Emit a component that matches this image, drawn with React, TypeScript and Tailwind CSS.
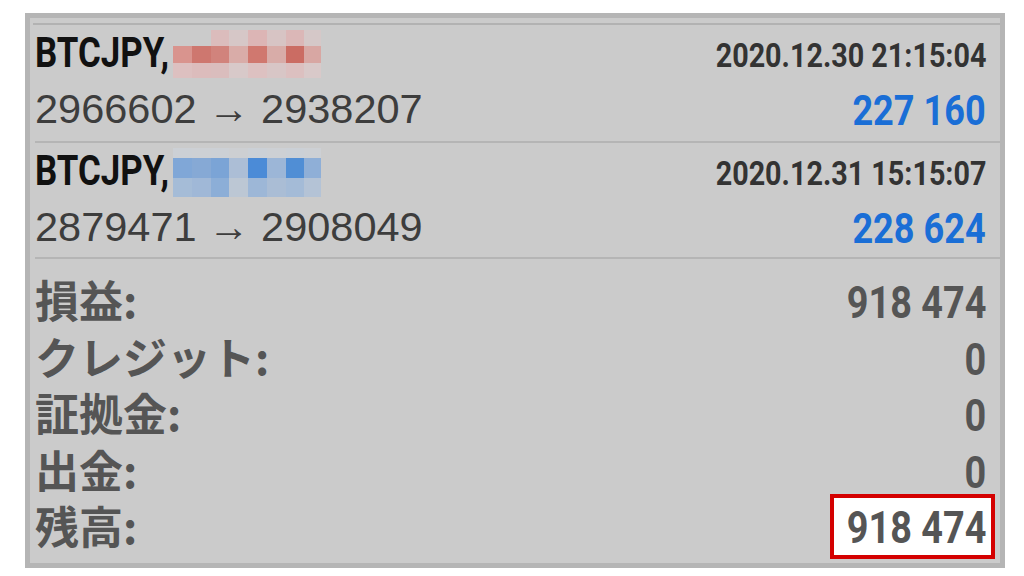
const cond = "font-['Roboto',sans-serif] font-bold inline-block whitespace-nowrap";
const regular = "font-['Liberation_Sans',Arial,sans-serif]";
const jp = "font-['Noto_Sans_CJK_JP','Noto_Sans',sans-serif]";

// pixelated blocks covering the order number
const redMosaic = {
  rows: ["h-[16px]", "h-[17px]", "h-[15px]"],
  cells: [
    ["bg-transparent", "bg-transparent", "bg-[#dbbcbc]", "bg-[#d6c7c7]", "bg-[#dcb5b5]", "bg-[#d7c4c4]", "bg-[#dbb7b7]", "bg-[#d5c8c8]"],
    ["bg-[#d9948e]", "bg-[#ce776f]", "bg-[#d1837c]", "bg-[#d9aca8]", "bg-[#d0786f]", "bg-[#d8aca8]", "bg-[#cb6c63]", "bg-[#d8a7a3]"],
    ["bg-[#ddc0c0]", "bg-[#dcbcbc]", "bg-[#dabdbd]", "bg-[#d8c9c9]", "bg-[#ddc1c1]", "bg-[#d8c6c6]", "bg-[#dcc0c0]", "bg-[#d9c9c9]"],
  ],
};

const blueMosaic = {
  rows: ["h-[10px]", "h-[20px]", "h-[19px]"],
  cells: [
    ["bg-[#ccd0d5]", "bg-[#cdd0d4]", "bg-[#ccd0d5]", "bg-[#cdcfd2]", "bg-[#cbd0d6]", "bg-[#cdd0d4]", "bg-[#cbd0d6]", "bg-[#cdd0d4]"],
    ["bg-[#80a7d7]", "bg-[#86a9d5]", "bg-[#7ba4d6]", "bg-[#acbed6]", "bg-[#4b8bd7]", "bg-[#9cb6d7]", "bg-[#508ed5]", "bg-[#8fafd7]"],
    ["bg-[#a5bcd7]", "bg-[#a0b8d7]", "bg-[#8caed7]", "bg-[#bcc7d4]", "bg-[#9db7d7]", "bg-[#aabdd5]", "bg-[#a4bbd7]", "bg-[#b4c3d6]"],
  ],
};

const colWidths = ["w-[19px]", "w-[19px]", "w-[18px]", "w-[19px]", "w-[19px]", "w-[19px]", "w-[18px]", "w-[17px]"];

function Mosaic({ data }: { data: typeof redMosaic }) {
  return (
    <div className="flex flex-col -mt-[2px]">
      {data.cells.map((row, r) => (
        <div key={r} className={`flex ${data.rows[r]}`}>
          {row.map((c, i) => (
            <div key={i} className={`${colWidths[i]} ${c}`} />
          ))}
        </div>
      ))}
    </div>
  );
}

function Deal({
  mosaic,
  time,
  prices,
  profit,
  height,
}: {
  mosaic: typeof redMosaic;
  time: string;
  prices: string;
  profit: string;
  height: string;
}) {
  return (
    <div className={`${height} pr-[14px] pt-[7px]`}>
      <div className="flex justify-between items-start h-[42px]">
        <div className="flex items-start">
          <div className="w-[138px]">
            <span className={`${cond} text-[42px] leading-[42px] text-[#111] scale-x-[0.83] origin-left`}>
              BTCJPY,
            </span>
          </div>
          <Mosaic data={mosaic} />
        </div>
        <span className={`${cond} text-[34px] leading-[34px] text-[#333] mt-[6px] scale-x-[0.845] origin-right`}>
          {time}
        </span>
      </div>
      <div className="flex justify-between items-start mt-[14px]">
        <span className={`${regular} text-[41.5px] leading-[41px] text-[#3d3d3d]`}>{prices}</span>
        <span className={`${cond} text-[43px] leading-[43px] text-[#1a6ed6] mt-[1px] scale-x-[0.84] origin-right`}>
          {profit}
        </span>
      </div>
    </div>
  );
}

const summary = [
  { label: "損益:", value: "918 474" },
  { label: "クレジット:", value: "0" },
  { label: "証拠金:", value: "0" },
  { label: "出金:", value: "0" },
];

export default function App() {
  return (
    <div className="w-[1024px] h-[576px] bg-white pl-[25px] pt-[13px]">
      <div className="w-[980px] h-[555px] border-[5px] border-[#b5b5b5] bg-[#cbcbcb] pl-[5px] pt-[5px]">
        <div className="h-[2px] bg-[#b2b2b2] -ml-[2px]" />
        <Deal
          mosaic={redMosaic}
          time="2020.12.30 21:15:04"
          prices="2966602 → 2938207"
          profit="227 160"
          height="h-[116px]"
        />
        <div className="h-[2px] bg-[#b5b5b5]" />
        <Deal
          mosaic={blueMosaic}
          time="2020.12.31 15:15:07"
          prices="2879471 → 2908049"
          profit="228 624"
          height="h-[114px]"
        />
        <div className="h-[2px] bg-[#b5b5b5]" />
        <div className="pt-[12px] pr-[14px]">
          {summary.map((s) => (
            <div key={s.label} className="flex justify-between items-baseline h-[56.5px]">
              <span className={`${jp} font-bold text-[44px] leading-[56.5px] text-[#555]`}>{s.label}</span>
              <span className={`${cond} text-[44px] leading-[56.5px] text-[#555] scale-x-[0.86] origin-right`}>
                {s.value}
              </span>
            </div>
          ))}
          <div className="flex justify-between items-start h-[56.5px]">
            <span className={`${jp} font-bold text-[44px] leading-[56.5px] text-[#555]`}>残高:</span>
            <div className="-mt-[3px] -mr-[9px] h-[65px] w-[165px] border-4 border-[#d40000] bg-white flex items-center justify-end pr-[5px]">
              <span className={`${cond} text-[44px] leading-[44px] text-[#555] mt-[2px] scale-x-[0.86] origin-right`}>
                918 474
              </span>
            </div>
          </div>
        </div>
      </div>
    </div>
  );
}
